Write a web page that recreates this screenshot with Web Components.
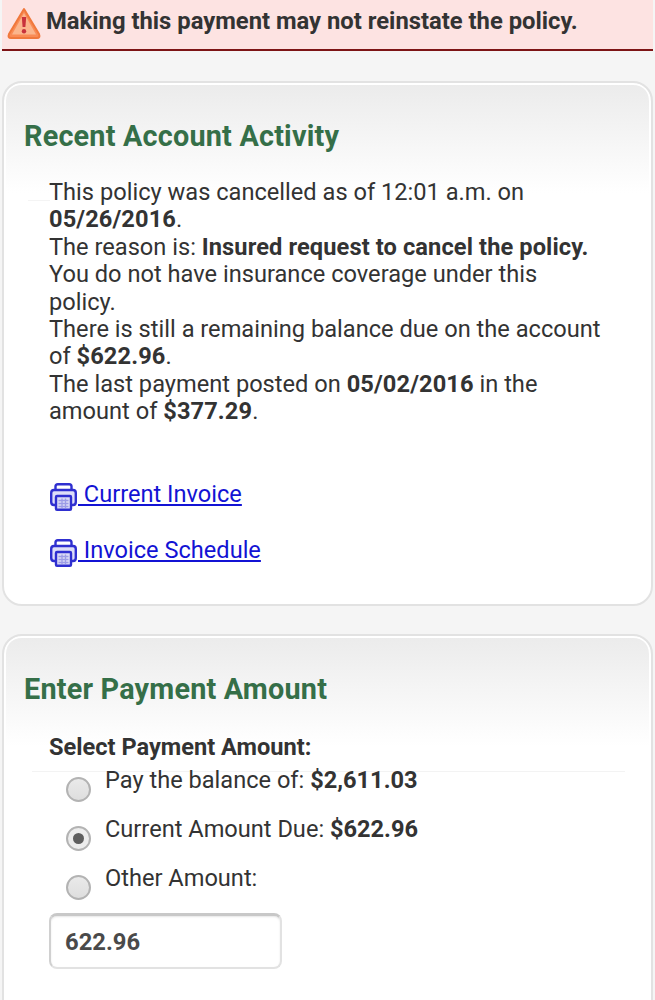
<!DOCTYPE html>
<html>
<head>
<meta charset="utf-8">
<style>
  html, body { margin: 0; padding: 0; height: 1000px; overflow: hidden; }
  body {
    background: #f5f5f5;
    color: #333;
    font-family: Roboto, "Liberation Sans", sans-serif;
    font-size: 23.6px;
  }
</style>
</head>
<body>
<alert-banner>Making this payment may not reinstate the policy.</alert-banner>

<section-card heading="Recent Account Activity" style="height:525px;margin-top:30px">
  <account-activity></account-activity>
</section-card>

<section-card heading="Enter Payment Amount" style="margin-top:28px;height:400px">
  <payment-form></payment-form>
</section-card>

<script>
const alertTemplate = document.createElement("template");
alertTemplate.innerHTML = `
  <style>
    :host {
      display: flex;
      align-items: center;
      gap: 4px;
      box-sizing: border-box;
      height: 51px;
      margin: 0 2px;
      padding: 0 0 7px 4px;
      background: #fde3e2;
      border-bottom: 2px solid #7d1416;
      font-size: 23.8px;
      font-weight: 700;
      color: #333;
      white-space: nowrap;
    }
    svg { flex: none; width: 36px; height: 34px; margin-top: 5px; }
  </style>
  <svg viewBox="0 0 36 34">
    <path d="M18 2 L33 27 Q34.5 31 31 31 L5 31 Q1.5 31 3 27 Z" fill="#f98b55" stroke="#f0783c" stroke-width="2" stroke-linejoin="round"/>
    <path d="M18 6 L30 27.5 L6 27.5 Z" fill="#fbb58c"/>
    <path d="M15.8 10 h4.4 l-.8 10 h-2.8 z" fill="#c8323c"/>
    <circle cx="18" cy="24.3" r="2.2" fill="#c8323c"/>
  </svg>
  <slot></slot>
`;

class AlertBanner extends HTMLElement {
  constructor() {
    super();
    this.attachShadow({ mode: "open" }).appendChild(alertTemplate.content.cloneNode(true));
  }
}
customElements.define("alert-banner", AlertBanner);

const cardTemplate = document.createElement("template");
cardTemplate.innerHTML = `
  <style>
    :host {
      display: block;
      box-sizing: border-box;
      margin: 0 2px;
      padding: 36px 21px 0 20px;
      background: linear-gradient(#ebebeb 0, #fff 110px);
      border: 2px solid #e2e2e2;
      box-shadow: inset 0 2px 0 #fff, inset 2px 0 0 #fff, inset -2px 0 0 #fff;
      border-radius: 20px;
    }
    h2 {
      margin: 0;
      font-size: 28.8px;
      line-height: 34px;
      font-weight: 700;
      color: #356f48;
      letter-spacing: .2px;
    }
  </style>
  <h2></h2>
  <slot></slot>
`;

class SectionCard extends HTMLElement {
  constructor() {
    super();
    this.attachShadow({ mode: "open" }).appendChild(cardTemplate.content.cloneNode(true));
    this.shadowRoot.querySelector("h2").textContent = this.getAttribute("heading");
  }
}
customElements.define("section-card", SectionCard);

// outlined printer, 27 wide, 28 high
const printerIcon = `<svg viewBox="0 0 27 28" width="27" height="28"><path d="M5.5 9 V3.5 Q5.5 1.2 7.8 1.2 H19.2 Q21.5 1.2 21.5 3.5 V9" fill="#fff" stroke="#2f2fd0" stroke-width="2.4"/><path d="M4 7 H23 Q25.8 7 25.8 10 V19 Q25.8 22 23 22 H4 Q1.2 22 1.2 19 V10 Q1.2 7 4 7 Z" fill="#dedef8" stroke="#2f2fd0" stroke-width="2.4"/><rect x="6" y="13" width="15" height="13.8" rx="1" fill="#dcdcf6" stroke="#2f2fd0" stroke-width="2.4"/><path d="M8.5 17.5 H18.5 M8.5 20.5 H18.5 M8.5 23.5 H18.5 M12 15.5 V25 M15.5 15.5 V25" stroke="#9c9ce6" stroke-width="1.3"/></svg>`;

const activityTemplate = document.createElement("template");
activityTemplate.innerHTML = `
  <style>
    :host {
      display: block;
      padding: 26px 23px 0 25px;
      background: linear-gradient(#f4f4f4, #f4f4f4) no-repeat 4px 47px / 22px 1px;
    }
    p { margin: 0; font-size: 23.64px; line-height: 27.4px; color: #333; }
    b { font-weight: 700; letter-spacing: .1px; }
    .links { display: flex; flex-direction: column; gap: 25px; margin-top: 54px; }
    a { display: block; color: #1313d4; text-decoration: underline; line-height: 28px; width: max-content; white-space: nowrap; }
    svg { vertical-align: -9px; margin-left: 1px; margin-right: 1px; }
  </style>
  <p>This policy was cancelled as of 12:01 a.m. on <b>05/26/2016</b>.<br>
  The reason is: <b>Insured request to cancel the policy.</b><br>
  You do not have insurance coverage under this policy.<br>
  There is still a remaining balance due on the account of <b>$622.96</b>.<br>
  The last payment posted on <b>05/02/2016</b> in the amount of <b>$377.29</b>.</p>
  <div class="links">
    <a href="#">${printerIcon} Current Invoice</a>
    <a href="#">${printerIcon} Invoice Schedule</a>
  </div>
`;

class AccountActivity extends HTMLElement {
  constructor() {
    super();
    this.attachShadow({ mode: "open" }).appendChild(activityTemplate.content.cloneNode(true));
  }
}
customElements.define("account-activity", AccountActivity);

const paymentTemplate = document.createElement("template");
paymentTemplate.innerHTML = `
  <style>
    :host { display: block; padding: 17px 0 0 25px; }
    .label { font-weight: 700; line-height: 48px; color: #333; }
    .rule { height: 1px; background: #f3f3f3; margin: 0 5px 0 -17px; }
    .options { display: flex; flex-direction: column; gap: 21px; margin-top: -6px; }
    .opt { display: flex; gap: 14px; padding-left: 17px; height: 28px; line-height: 28px; }
    .radio {
      flex: none; box-sizing: border-box; width: 25px; height: 25px; margin-top: 11px;
      border-radius: 50%; border: 2px solid #b3b3b3;
      background: linear-gradient(#eaeaea, #dedede);
      display: flex; align-items: center; justify-content: center;
    }
    .radio.on { background: #ececec; }
    .radio.on::after { content: ""; width: 11px; height: 11px; border-radius: 50%; background: #5e5e5e; }
    b { font-weight: 700; }
    .amount {
      box-sizing: border-box; width: 233px; height: 56px; margin-top: 21px;
      border: 2px solid #e2e2e2; border-top: 3px solid #c8c8c8; border-left-color: #d0d0d0;
      border-radius: 8px; background: #fff;
      box-shadow: inset 0 1px 2px #e6e6e6;
      padding-left: 14px; display: flex; align-items: center;
      font-weight: 700; font-size: 23.8px; color: #4a4a4a;
    }
  </style>
  <div class="label">Select Payment Amount:</div>
  <div class="rule"></div>
  <div class="options">
    <div class="opt"><span class="radio"></span><span>Pay the balance of: <b>$2,611.03</b></span></div>
    <div class="opt"><span class="radio on"></span><span>Current Amount Due: <b>$622.96</b></span></div>
    <div class="opt"><span class="radio"></span><span>Other Amount:</span></div>
  </div>
  <div class="amount">622.96</div>
`;

class PaymentForm extends HTMLElement {
  constructor() {
    super();
    this.attachShadow({ mode: "open" }).appendChild(paymentTemplate.content.cloneNode(true));
  }
}
customElements.define("payment-form", PaymentForm);
</script>
</body>
</html>
